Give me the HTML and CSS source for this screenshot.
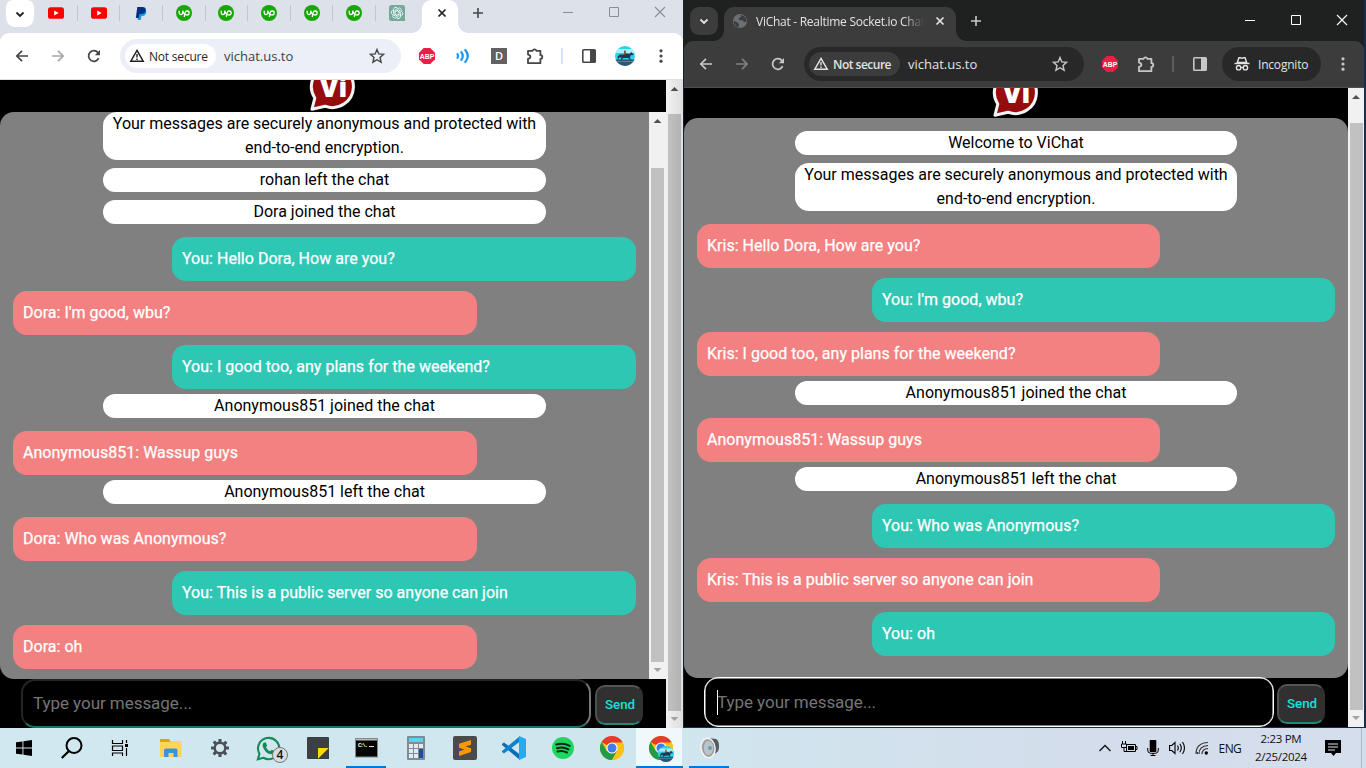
FILE: index.html
```html
<!DOCTYPE html>
<html lang="en">
<head>
<meta charset="utf-8">
<title>ViChat</title>
<link rel="stylesheet" href="styles.css">
</head>
<body>
<svg class="sprite" aria-hidden="true">
  <symbol id="youtube" viewBox="0 0 16 16"><rect y="2.2" width="16" height="11.6" rx="2.6" fill="#f00"/><path d="M6.2 5.6v4.8L10.7 8z" fill="#fff"/></symbol>
  <symbol id="paypal" viewBox="0 0 16 16"><path d="M5.6 4.2h6c1.700 1 2 2.600 1.300 4.400-.7 2-2.300 2.500-4.400 2.500l-.8 3.900H4.600z" fill="#179bd7"/><path d="M4.300 2h5c2.800 0 3.900 1.300 3.400 3.600-.5 2.600-2.300 3.500-4.700 3.500H6.500l-.8 3.800H2.800z" fill="#002f86"/></symbol>
  <symbol id="upwork" viewBox="0 0 16 16"><circle cx="8" cy="8" r="8" fill="#14a800"/><path d="M3.200 5.800v2a1.700 1.700 0 0 0 3.500 0v-2c.5 1.700 1.300 3 2.300 4M8.200 12l1-4.300a2 2 0 1 1 1.900 2.300c-1 0-1.700-.5-2.300-1.200" fill="none" stroke="#fff" stroke-width="1.300"/></symbol>
  <symbol id="gpt" viewBox="0 0 16 16"><path d="M2.500 0H13.500A2.500 2.500 0 0 1 16 2.500V16H2.500A2.500 2.500 0 0 1 0 13.500V2.500A2.500 2.500 0 0 1 2.500 0z" fill="#74aa9c"/><g fill="none" stroke="#fff" stroke-width=".8"><path id="petal" d="M6 9.100V5.200l3.100-1.900a2.300 2.300 0 0 1 3.400 2.200"/><use href="#petal" transform="rotate(60 8 8)"/><use href="#petal" transform="rotate(120 8 8)"/><use href="#petal" transform="rotate(180 8 8)"/><use href="#petal" transform="rotate(240 8 8)"/><use href="#petal" transform="rotate(300 8 8)"/></g></symbol>
  <symbol id="chev" viewBox="0 0 16 16"><path d="M4.500 6.500 8 10l3.500-3.500" fill="none" stroke="currentColor" stroke-width="1.800"/></symbol>
  <symbol id="close" viewBox="0 0 16 16"><path d="M4.500 4.500l7 7m0-7l-7 7" fill="none" stroke="currentColor" stroke-width="1.700"/></symbol>
  <symbol id="plus" viewBox="0 0 16 16"><path d="M8 3v10M3 8h10" fill="none" stroke="currentColor" stroke-width="1.600"/></symbol>
  <symbol id="min" viewBox="0 0 16 16"><path d="M3 8.500h10" stroke="currentColor"/></symbol>
  <symbol id="max" viewBox="0 0 16 16"><path d="M3.500 3.500h9v9h-9z" fill="none" stroke="currentColor"/></symbol>
  <symbol id="wclose" viewBox="0 0 16 16"><path d="M3 3l10 10M13 3L3 13" stroke="currentColor" stroke-width="1.100"/></symbol>
  <symbol id="back" viewBox="0 0 16 16"><path d="M14 8H3M8 2.800 2.800 8 8 13.200" fill="none" stroke="currentColor" stroke-width="1.700"/></symbol>
  <symbol id="fwd" viewBox="0 0 16 16"><path d="M2 8h11M8 2.800 13.200 8 8 13.200" fill="none" stroke="currentColor" stroke-width="1.700"/></symbol>
  <symbol id="reload" viewBox="0 0 16 16"><path d="M12.700 10.200A5.300 5.300 0 1 1 12 4.600" fill="none" stroke="currentColor" stroke-width="1.700"/><path d="M14 2v5.200H8.800z" fill="currentColor"/></symbol>
  <symbol id="warn" viewBox="0 0 16 16"><path d="M8 2.400 14.200 13.200H1.800z" fill="none" stroke="currentColor" stroke-width="1.500"/><path d="M8 6v3.600M8 10.400v1.500" stroke="currentColor" stroke-width="1.400"/></symbol>
  <symbol id="star" viewBox="0 0 16 16"><path d="M8 1.500l1.800 4.400 4.800.4-3.600 3.200 1.100 4.700L8 11.700l-4.100 2.500L5 9.500 1.400 6.300l4.800-.4z" fill="none" stroke="currentColor" stroke-width="1.400"/></symbol>
  <symbol id="abp" viewBox="0 0 16 16"><path d="M4.700 0h6.600L16 4.700v6.600L11.300 16H4.700L0 11.300V4.700z" fill="#ed1e45"/><text x="8" y="10.900" text-anchor="middle" textLength="14.500" lengthAdjust="spacingAndGlyphs" class="abp">ABP</text></symbol>
  <symbol id="waves" viewBox="0 0 16 16"><g fill="none" stroke="#1597f5" stroke-width="2.200" stroke-linecap="round"><path d="M2.500 6.200q1.200 1.800 0 3.600"/><path d="M6.300 4.200q3 3.800 0 7.600"/><path d="M10.300 2q5 6 0 12"/></g></symbol>
  <symbol id="puzzle" viewBox="0 0 18 18"><path d="M2 3.800h4.600a2 2 0 0 1 3.800 0h4v4.400a1.900 1.900 0 0 1 0 3.800v4.200H2v-4.400c3.200-.7 3.200-3.600 0-4.200z" fill="none" stroke="currentColor" stroke-width="1.800" stroke-linejoin="round"/></symbol>
  <symbol id="panel" viewBox="0 0 16 16"><rect x="1.800" y="1.800" width="12.400" height="12.400" rx=".8" fill="none" stroke="currentColor" stroke-width="1.600"/><path d="M9 2h5v12H9z" fill="currentColor"/></symbol>
  <symbol id="dots" viewBox="0 0 16 16"><g fill="currentColor"><circle cx="8" cy="2.800" r="1.600"/><circle cx="8" cy="8" r="1.600"/><circle cx="8" cy="13.200" r="1.600"/></g></symbol>
  <symbol id="avatar" viewBox="0 0 20 20"><path fill="#26d4ee" d="M0 0h20v20H0z"/><path fill="#a8eff7" d="M0 3h20v4H0z"/><path fill="#2f5670" d="M0 13.500h20V20H0z"/><path fill="#5a8598" d="M1 15h18v1H1z"/><path d="M2.500 11l2-2.500h4l1-1h3l2 .8L16 6l2.500 2-1 1.200-1.500-.2-1.200 2.500 1.400 2.500-.7.300-2.200-2.400-5 .2-2 2.400H5.500l1-3L4 11.500 3 14z" fill="#1f3850"/><path d="M9 8.500V4.500h1.800v4z" fill="#805638"/></symbol>
  <symbol id="globe" viewBox="0 0 16 16"><circle cx="8" cy="8" r="7" fill="#6b7076"/><path d="M1.800 7.500l4 2.300 1.300 1.600-.7 3A7 7 0 0 1 1.800 7.500zM8.300 2l1 1.500-2.800 2 .8 1.500 3.500.5 1 1.600 2.600-.4A6 6 0 0 0 8.300 2z" fill="#3c3c3c"/></symbol>
  <symbol id="incog" viewBox="0 0 16 16"><path d="M.5 7.500h15" stroke="currentColor" stroke-width="1.400"/><path d="M3.300 6.500l1.600-4.700h1.600l1.500.5 1.500-.5h1.600l1.600 4.700z" fill="none" stroke="currentColor" stroke-width="1.400"/><circle cx="4.600" cy="11.700" r="2.200" fill="none" stroke="currentColor" stroke-width="1.400"/><circle cx="11.400" cy="11.700" r="2.200" fill="none" stroke="currentColor" stroke-width="1.400"/><path d="M6.800 11.500h2.400" stroke="currentColor" stroke-width="1.200"/></symbol>
  <symbol id="logo" viewBox="0 0 48 48"><path d="M3 46.200 5.800 35A21 21 0 1 1 16 43.200z" fill="#960c0c" stroke="#f4f4f4" stroke-width="3" stroke-linejoin="round"/><text x="24.500" y="34" text-anchor="middle" class="logo-text">Vi</text></symbol>
  <symbol id="chrome" viewBox="0 0 24 24"><circle cx="12" cy="12" r="12" fill="#fbc116"/><path d="M12 12 1.600 6A12 12 0 0 1 22.400 6z" fill="#e33b2e"/><path d="M1.600 6A12 12 0 0 0 12 24l5.200-9L12 12 6.800 15z" fill="#229a48"/><path d="M12 6.500H22.700A12 12 0 0 1 12 24l5-9z" fill="#fbc116"/><circle cx="12" cy="12" r="5.600" fill="#fff"/><circle cx="12" cy="12" r="4.500" fill="#3f7de8"/></symbol>
</svg>

<div class="desktop">
  <div class="windows">
    <section class="window light">
      <div class="tabs">
        <div class="tab-search"><svg><use href="#chev"/></svg></div>
        <div class="pinned">
          <svg><use href="#youtube"/></svg><i></i><svg><use href="#youtube"/></svg><i></i><svg><use href="#paypal"/></svg><i></i><svg><use href="#upwork"/></svg><i></i><svg><use href="#upwork"/></svg><i></i><svg><use href="#upwork"/></svg><i></i><svg><use href="#upwork"/></svg><i></i><svg><use href="#upwork"/></svg><i></i><svg><use href="#gpt"/></svg>
        </div>
        <div class="tab"><svg><use href="#close"/></svg></div>
        <svg class="new"><use href="#plus"/></svg>
        <div class="controls"><svg><use href="#min"/></svg><svg><use href="#max"/></svg><svg><use href="#wclose"/></svg></div>
      </div>
      <div class="toolbar">
        <span class="slot"><svg><use href="#back"/></svg></span>
        <span class="slot dim"><svg><use href="#fwd"/></svg></span>
        <span class="slot"><svg><use href="#reload"/></svg></span>
        <div class="omnibox"><span class="chip"><svg><use href="#warn"/></svg><b>Not secure</b></span><span class="url">vichat.us.to</span><svg class="star"><use href="#star"/></svg></div>
        <span class="slot"><svg><use href="#abp"/></svg></span>
        <span class="slot"><svg><use href="#waves"/></svg></span>
        <span class="slot"><span class="ext-d">D</span></span>
        <span class="slot"><svg class="puzzle"><use href="#puzzle"/></svg></span>
        <span class="divider"></span>
        <span class="slot"><svg><use href="#panel"/></svg></span>
        <span class="slot"><svg class="avatar"><use href="#avatar"/></svg></span>
        <span class="slot"><svg><use href="#dots"/></svg></span>
      </div>
      <div class="view">
        <div class="page">
          <header><svg class="logo"><use href="#logo"/></svg></header>
          <div class="chat">
            <div class="messages">
              <p class="info">Your messages are securely anonymous and protected with<br>end-to-end encryption.</p>
              <p class="info">rohan left the chat</p>
              <p class="info">Dora joined the chat</p>
              <p class="msg mine">You: Hello Dora, How are you?</p>
              <p class="msg">Dora: I'm good, wbu?</p>
              <p class="msg mine">You: I good too, any plans for the weekend?</p>
              <p class="info">Anonymous851 joined the chat</p>
              <p class="msg">Anonymous851: Wassup guys</p>
              <p class="info">Anonymous851 left the chat</p>
              <p class="msg">Dora: Who was Anonymous?</p>
              <p class="msg mine">You: This is a public server so anyone can join</p>
              <p class="msg">Dora: oh</p>
            </div>
            <div class="scroll inner"><i class="up"></i><b></b><i class="down"></i></div>
          </div>
          <div class="composer"><div class="field">Type your message...</div><button>Send</button></div>
        </div>
        <div class="scroll outer"><i class="up"></i><b></b><i class="down"></i></div>
      </div>
    </section>

    <section class="window dark">
      <div class="tabs">
        <div class="tab-search"><svg><use href="#chev"/></svg></div>
        <div class="tab"><svg><use href="#globe"/></svg><span class="title">ViChat - Realtime Socket.io Chat</span><svg><use href="#close"/></svg></div>
        <svg class="new"><use href="#plus"/></svg>
        <div class="controls"><svg><use href="#min"/></svg><svg><use href="#max"/></svg><svg><use href="#wclose"/></svg></div>
      </div>
      <div class="toolbar">
        <span class="slot"><svg><use href="#back"/></svg></span>
        <span class="slot dim"><svg><use href="#fwd"/></svg></span>
        <span class="slot"><svg><use href="#reload"/></svg></span>
        <div class="omnibox"><span class="chip"><svg><use href="#warn"/></svg><b>Not secure</b></span><span class="url">vichat.us.to</span><svg class="star"><use href="#star"/></svg></div>
        <span class="slot"><svg><use href="#abp"/></svg></span>
        <span class="slot"><svg class="puzzle"><use href="#puzzle"/></svg></span>
        <span class="divider"></span>
        <span class="slot"><svg><use href="#panel"/></svg></span>
        <span class="incognito"><svg><use href="#incog"/></svg><span>Incognito</span></span>
        <span class="slot"><svg><use href="#dots"/></svg></span>
      </div>
      <div class="view">
        <div class="page">
          <header><svg class="logo"><use href="#logo"/></svg></header>
          <div class="chat">
            <div class="messages">
              <p class="info">Welcome to ViChat</p>
              <p class="info">Your messages are securely anonymous and protected with<br>end-to-end encryption.</p>
              <p class="msg">Kris: Hello Dora, How are you?</p>
              <p class="msg mine">You: I'm good, wbu?</p>
              <p class="msg">Kris: I good too, any plans for the weekend?</p>
              <p class="info">Anonymous851 joined the chat</p>
              <p class="msg">Anonymous851: Wassup guys</p>
              <p class="info">Anonymous851 left the chat</p>
              <p class="msg mine">You: Who was Anonymous?</p>
              <p class="msg">Kris: This is a public server so anyone can join</p>
              <p class="msg mine">You: oh</p>
            </div>
          </div>
          <div class="composer"><div class="field focused">Type your message...</div><button>Send</button></div>
        </div>
        <div class="scroll outer"><i class="up"></i><b></b><i class="down"></i></div>
      </div>
    </section>
  </div>

  <footer class="taskbar">
    <div class="sys">
      <span><svg viewBox="0 0 16 16" width="16" height="16"><path d="M0 2.300 6.500 1.400v6.100H0zM7.400 1.200 16 0v7.500H7.400zM0 8.400h6.500v6.200L0 13.700zM7.400 8.400H16V16l-8.600-1.200z"/></svg></span>
      <span><svg viewBox="0 0 24 24" width="24" height="24"><circle cx="14" cy="9.500" r="7.500" fill="none" stroke="#000" stroke-width="2"/><path d="M9 15 1.800 22" stroke="#000" stroke-width="2.300"/></svg></span>
      <span><svg viewBox="0 0 18 18" width="18" height="18"><path d="M1.500 1v3.500h10V1M1.500 17v-3h10v3M1.500 7h10v4.500h-10zM15.500 1v3M15.500 9v8" fill="none" stroke="#000" stroke-width="1.200"/><path d="M14 5h3v3h-3z"/></svg></span>
    </div>
    <div class="apps">
      <span><svg viewBox="0 0 22 20" width="22" height="20"><path d="M0 1h9l2 2h10.500v16H0z" fill="#ffd45c"/><path d="M0 1h9l1.500 3H0z" fill="#e3a10b"/><path d="M4 19v-6.500q0-2 2-2h9.500q2 0 2 2V19h-4v-4h-5v4z" fill="#3a93dc"/></svg></span>
      <span><svg viewBox="0 0 20 20" width="18" height="18"><path d="M8.300 0h3.400v3l2 .9 2.300-2 2.300 2.300-2 2.300.8 1.800H20v3.400h-3l-.9 2 2 2.300-2.300 2.300-2.300-2-1.800.8v3H8.300v-3l-2-.9-2.300 2L1.700 16l2-2.300-.9-2H0V8.300h3l.9-2-2-2.300 2.300-2.300 2.300 2 1.800-.8zM10 5.500a4.500 4.500 0 1 0 0 9 4.500 4.500 0 0 0 0-9z" fill="#4a5056" fill-rule="evenodd"/></svg></span>
      <span class="wa"><svg viewBox="0 0 24 24" width="25" height="25"><path d="M1.800 22.400l1.500-5.300a10.200 10.200 0 1 1 3.800 3.800z" fill="none" stroke="#128c56" stroke-width="2"/><path d="M7.500 6.300h2l1.200 3-1.200 1.500q1.400 2.600 4 3.900l1.600-1.500 2.700 1.300q.2 2.500-2.800 3.100Q8.500 17 6.300 9.500q-.1-2 1.200-3.200z" fill="#128c56"/></svg><em>4</em></span>
      <span><svg viewBox="0 0 22 22" width="22" height="22"><rect width="22" height="22" rx="1" fill="#3c4042"/><path d="M11 11H22L11 22z" fill="#ffdc00"/><path d="M22 11V22H11z" fill="#3c4042"/></svg></span>
      <span class="run"><svg viewBox="0 0 23 20" width="23" height="20"><rect x=".5" y=".5" width="22" height="18.500" fill="#050505" stroke="#888"/><path d="M1 1h21v1.500H1z" fill="#bbb"/><text x="3" y="9" textLength="10" class="prompt">C:\.</text><path d="M14 8.500h5" stroke="#ddd"/></svg></span>
      <span><svg viewBox="0 0 18 24" width="18" height="24"><rect width="18" height="24" rx="1" fill="#7f8c96"/><path fill="#58d5ef" d="M2 2h14v4H2z"/><path fill="#e4eaee" d="M2 8h4v4H2zM7 8h4v4H7zM12 8h4v4h-4zM2 13h4v4H2zM7 13h4v4H7zM2 18h4v4H2zM7 18h4v4H7z"/><path fill="#1e4f91" d="M12 13h4v9h-4z"/></svg></span>
      <span><svg viewBox="0 0 24 24" width="24" height="24"><rect width="24" height="24" rx="2" fill="#4b4b4b"/><path d="M18 4v4.800L12.500 10.600 18 12.300V16L6 20v-4.500l5.500-1.900L6 11.700V7.800z" fill="#ff9800"/></svg></span>
      <span><svg viewBox="0 0 24 24" width="24" height="24"><path d="M0 8l2-1.500L18 18.500V24L0 9z" fill="#0a6db5"/><path d="M0 16l2 1.500L18 5.500V0L0 15z" fill="#0f82cc"/><path d="M17 0 24 3v18l-7 3z" fill="#28a8ee"/></svg></span>
      <span><svg viewBox="0 0 22 22" width="22" height="22"><circle cx="11" cy="11" r="11" fill="#1fd661"/><path d="M4.300 7.500q7-2 13.500 1.300M5 11.200q6-1.700 11.500 1.200M5.500 14.500q5-1.300 9.500 1" fill="none" stroke="#08240f" stroke-width="2" stroke-linecap="round"/></svg></span>
      <span><svg width="24" height="24"><use href="#chrome"/></svg></span>
      <span class="run current"><svg width="24" height="24"><use href="#chrome"/></svg><svg class="who"><use href="#avatar"/></svg></span>
      <span class="run"><svg viewBox="0 0 20 22" width="20" height="22"><path d="M8 1l8 1q3 1.500 3 7t-3 7l-7 4z" fill="#555b5e"/><ellipse cx="8" cy="11" rx="7" ry="9.800" fill="#aaa" stroke="#f5f5f5" stroke-width="1.500" transform="rotate(-8 8 11)"/><ellipse cx="8.500" cy="11" rx="5.300" ry="7.500" fill="#b9c5cb" stroke="#999"/><circle cx="10" cy="11" r="2" fill="#6c9db2"/></svg></span>
    </div>
    <div class="tray">
      <span><svg viewBox="0 0 16 16" width="16" height="16"><path d="M2.500 11 8 5.500l5.500 5.500" fill="none" stroke="#111" stroke-width="1.300"/></svg></span>
      <span><svg viewBox="0 0 17 16" width="17" height="16"><path d="M5.500 4.500h9v7h-9zM15 6.500h1v3h-1M3 7.500v4h3M1.500 1v3M4.500 1v3M.5 4h5v3.500h-5z" fill="none" stroke="#000"/><path d="M7 6h6v4H7z"/></svg></span>
      <span><svg viewBox="0 0 12 16" width="12" height="16"><rect x="2.700" y="0" width="6.600" height="12" rx=".7"/><path d="M.7 8v2q0 3.300 3 3.300h4.600q3 0 3-3.300V8M6 13v2.500M3.500 15.500h5" fill="none" stroke="#000"/></svg></span>
      <span><svg viewBox="0 0 17 16" width="17" height="16"><path d="M.6 5.500h2.200L6 2.500v11l-3.200-3H.6zM8.500 5.500q1.500 2.500 0 5M10.800 3.800q3 4.200 0 8.400M13.500 2q4 6 0 12" fill="none" stroke="#000" stroke-width="1.100"/></svg></span>
      <span><svg viewBox="0 0 14 14" width="14" height="14"><path d="M1 13Q1 2 13 1.500M4 13Q4 5 13 4.500M7 13Q7 8 13 7.500M2.500 13v-2" fill="none" stroke="#333" stroke-width="1.200"/><circle cx="11.300" cy="12" r="1.700"/></svg></span>
      <span class="lang">ENG</span>
      <span class="clock"><span class="time">2:23 PM</span><span class="date">2/25/2024</span></span>
      <span class="note"><svg viewBox="0 0 16 16" width="16" height="16"><path d="M0 0h16v13h-5l-2.500 3L6 13H0z"/><path d="M3 4h10M3 7h10M3 10h7" stroke="#dce3ed" stroke-width="1.200"/></svg></span>
    </div>
  </footer>
</div>
</body>
</html>
```
FILE: styles.css
```css
* { box-sizing: border-box; }
body { margin: 0; overflow: hidden; font-family: "Open Sans", "Noto Sans", sans-serif; }
svg { display: block; flex: none; }
.sprite { display: none; }
.abp { font: bold 7.5px "Liberation Sans", sans-serif; fill: #fff; }
.logo-text { font: 800 27px "Open Sans", sans-serif; fill: #fff; }
.prompt { font: bold 6px "Liberation Mono", monospace; fill: #fff; }
.desktop { width: 1366px; height: 768px; display: flex; flex-direction: column; }
.windows { height: 728px; display: flex; background: #18222b; }
.window { display: flex; flex-direction: column; overflow: hidden; }
.light { width: 683px; margin-right: 1px; background: #dde1e9; color: #444746; }
.dark { width: 682px; background: #1f2020; color: #c7c7c7; border-right: 2px solid #1b2c49; border-bottom: 1px solid #1b2c49; }

.tabs { display: flex; flex: none; }
.tabs svg { width: 16px; height: 16px; }
.light .tabs { height: 33px; padding-left: 6px; }
.dark .tabs { height: 41px; padding: 7px 0 0 6px; }
.tab-search { width: 28px; height: 28px; border-radius: 9px; display: grid; place-items: center; flex: none; }
.light .tab-search { height: 27px; background: #fff; color: #1f1f1f; border-radius: 7px 7px 9px 9px; }
.dark .tab-search { background: #3c3c3c; color: #e3e3e3; }
.pinned { display: flex; flex: none; width: 388px; height: 26px; padding-left: 14px; align-items: center; gap: 12.800px; }
.pinned i { flex: none; width: 1px; height: 16px; background: #c5c5c3; }
.tab { position: relative; display: flex; align-items: center; flex: none; }
.tab::before, .tab::after { content: ""; position: absolute; bottom: 0; width: 10px; height: 10px; }
.tab::before { left: -10px; background: radial-gradient(circle at 0 0, transparent 9.500px, var(--bar) 10px); }
.tab::after { right: -10px; background: radial-gradient(circle at 100% 0, transparent 9.500px, var(--bar) 10px); }
.light { --bar: #fff; }
.dark { --bar: #3c3c3c; }
.light .tab { width: 36px; padding: 0 0 7px 12px; background: #fff; border-radius: 9px 9px 0 0; color: #1f1f1f; }
.dark .tab { width: 232px; margin-left: 6px; padding: 0 8px 6px; background: #3c3c3c; border-radius: 10px 10px 0 0; color: #e3e3e3; }
.title { width: 168px; margin: 0 8px; overflow: hidden; white-space: nowrap; font-size: 12px; letter-spacing: -.27px; -webkit-mask-image: linear-gradient(90deg, #000 147px, transparent 168px); mask-image: linear-gradient(90deg, #000 147px, transparent 168px); }
.new { margin: 5px 0 0 12px; }
.dark .new { margin-top: 6px; }
.controls { display: flex; gap: 30px; margin-left: auto; }
.light .controls { padding: 4px 15px 0 0; color: #8a8d91; }
.dark .controls { padding: 5px 14px 0 0; color: #fff; }

.toolbar { height: 47px; flex: none; display: flex; align-items: center; padding-left: 4px; border-bottom: 1px solid #e0e0e0; border-radius: 9px 9px 0 0; background: #fff; }
.dark .toolbar { background: #3c3c3c; border-color: #505050; }
.slot { width: 36px; flex: none; display: grid; place-items: center; }
.slot svg { width: 16px; height: 16px; }
.slot .puzzle { width: 18px; height: 18px; }
.slot .avatar { width: 20px; height: 20px; border-radius: 50%; }
.dim { opacity: .48; }
.omnibox { width: 281px; height: 34px; margin: 0 8px; padding: 0 16px 0 5px; border-radius: 17px; display: flex; align-items: center; background: #eceff8; flex: none; }
.dark .omnibox { width: 280px; background: #282828; }
.chip { width: 91px; height: 24px; padding-left: 4px; border-radius: 12px; background: #fff; display: flex; align-items: center; gap: 4px; font-size: 12px; color: #1f1f1f; }
.chip svg, .star { width: 16px; height: 16px; }
.chip b { font-weight: 400; white-space: nowrap; letter-spacing: -.2px; }
.dark .chip { background: #3c3c3c; color: #e3e3e3; }
.dark .chip b { font-weight: 600; letter-spacing: -.5px; }
.url { margin-left: 8px; font-size: 13px; color: #3c3d40; }
.dark .url { color: #e3e3e3; }
.star { margin-left: auto; }
.ext-d { width: 16px; height: 16px; background: #616161; color: #fff; font: 600 11px/16px "Open Sans", sans-serif; text-align: center; }
.divider { width: 2px; height: 16px; margin: 0 8px; background: #d3e3fd; flex: none; }
.dark .divider { background: #5c5c5c; }
.incognito { width: 99px; height: 34px; margin: 0 4px; padding-left: 12px; border-radius: 17px; background: #282828; color: #e3e3e3; display: flex; align-items: center; gap: 8px; font-size: 12px; letter-spacing: -.2px; flex: none; }
.incognito svg { width: 16px; height: 16px; }

.view { flex: 1; min-height: 0; display: flex; background: #000; }
.page { display: flex; flex-direction: column; font-family: Roboto, sans-serif; }
.light .page { width: 666px; }
.dark .page { width: 664px; }
header { flex: none; display: flex; justify-content: center; align-items: flex-end; padding-bottom: 1px; overflow: hidden; }
.light header { height: 32px; }
.dark header { height: 30px; }
.logo { width: 48px; height: 48px; }
.chat { flex: none; display: flex; background: gray; border-radius: 14px; overflow: hidden; }
.light .chat { height: 567px; border-radius: 14px 0 0 14px; }
.dark .chat { height: 560px; }
.messages { flex: 1; padding: 0 13px; display: flex; flex-direction: column; font-size: 16px; line-height: 24px; }
.dark .messages { padding-top: 13px; }
.messages p { margin: 0; flex: none; }
.messages .info { width: 443px; margin: 0 0 8px; align-self: center; border-radius: 14px; background: #fff; color: #000; text-align: center; }
.dark .messages .info { width: 442px; }
.messages .msg { width: 464px; margin: 5px 0; padding: 10px; border-radius: 14px; background: #f48181; color: #fff; letter-spacing: .02px; -webkit-text-stroke: .25px #fff; }
.dark .messages .msg { width: 463px; }
.messages .mine { align-self: flex-end; background: #2ec7b4; }
.composer { display: flex; font-size: 17px; }
.light .composer { padding-left: 21px; }
.dark .composer { padding-left: 20px; }
.field { width: 570px; height: 49px; padding: 0 10px; line-height: 45px; border: 2px solid; border-color: #252525 #777 #187469 #252525; border-radius: 14px; color: #757575; letter-spacing: -.05px; }
.focused { height: 50px; margin-top: -1px; border: 1px solid #fff; box-shadow: inset 0 0 0 .5px #fff; position: relative; line-height: 49px; padding-left: 12px; }
.focused::before { content: ""; position: absolute; left: 12px; top: 12px; width: 1px; height: 25px; background: #fff; }
button { width: 48px; height: 40px; margin: 6px 0 0 4px; padding: 0 0 2px 2px; border: 2px solid; border-color: #555 #303030 #25867b #505050; border-radius: 10px; background: #303030; color: #12e3dc; font: 500 13.330px Roboto, sans-serif; }
.dark button { margin-left: 3px; }
.scroll { display: flex; flex-direction: column; align-items: center; background: #f1f1f1; flex: none; width: 17px; }
.scroll b { width: 13px; background: #c1c1c1; }
.scroll i { width: 8px; height: 4px; background: #505050; clip-path: polygon(50% 0, 100% 100%, 0 100%); margin-top: 7px; }
.scroll .down { background: #a3a3a3; clip-path: polygon(0 0, 100% 0, 50% 100%); margin-top: 6px; }
.inner b { height: 494px; margin-top: 45px; }
.light .outer b { height: 597px; margin-top: 23px; }
.light .outer { background: linear-gradient(90deg, #f1f1f1, #dedede); }
.light .outer b { background: linear-gradient(90deg, #c1c1c1, #b3b3b3); }
.dark .outer { width: 16px; }
.dark .outer b { height: 587px; margin-top: 24px; }

.taskbar { height: 40px; display: flex; background: linear-gradient(90deg, #d2e8f0, #d0e6ef 50%, #d4ddeb 80%, #d5deed); color: #111; }
.sys, .apps, .tray { display: flex; flex: none; }
.sys span { width: 48px; display: grid; place-items: center; }
.apps { margin-left: 2px; }
.apps > span { width: 49px; display: grid; place-items: center; position: relative; }
.run::after { content: ""; position: absolute; bottom: 0; left: 4px; right: 5px; height: 2px; background: #0078d7; }
.current { background: linear-gradient(90deg, #eff8fb 46px, transparent 46px); }
.current::after { left: 0; right: 2px; }
.wa em { position: absolute; left: 28px; top: 19px; width: 16px; height: 16px; border: 1px solid #777; border-radius: 50%; background: #d8dedf; font: normal 600 12px/14px "Open Sans", sans-serif; text-align: center; }
.who { position: absolute; left: 22px; top: 18px; width: 16px; height: 16px; border-radius: 50%; }
.tray { margin-left: auto; width: 273px; padding-left: 4px; border-right: 1px solid #a9b7c6; margin-right: 4px; font-size: 12px; }
.tray > span { width: 24.200px; flex: none; display: grid; place-items: center; }
.tray .lang { width: 32px; letter-spacing: -.6px; }
.tray .clock { width: 70px; align-content: center; padding-bottom: 1px; font-size: 11.500px; line-height: 18px; letter-spacing: -.3px; }
.tray .note { width: 32px; margin-left: 1px; }
```
